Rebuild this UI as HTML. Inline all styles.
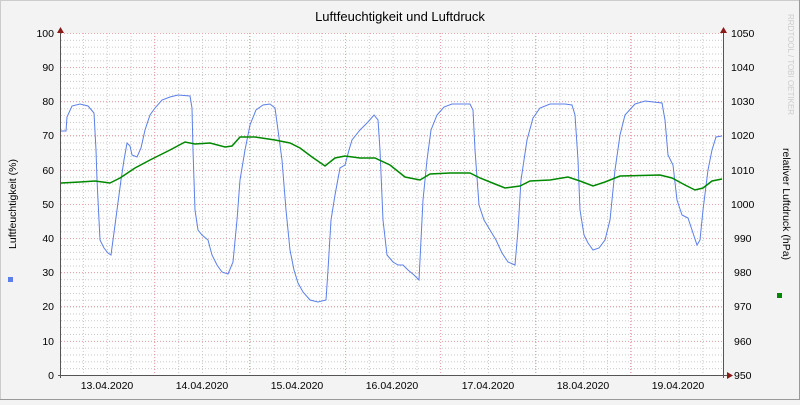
<!DOCTYPE html>
<html><head><style>
body{margin:0;width:800px;height:400px;overflow:hidden;background:#f3f3f3}
svg text{font-family:"Liberation Sans",sans-serif;font-size:10.5px;fill:#000}
</style></head><body>
<svg width="800" height="400" xmlns="http://www.w3.org/2000/svg">
<defs>
<pattern id="hg" x="61" y="33" width="800" height="6.84" patternUnits="userSpaceOnUse"><line x1="0" y1="0.5" x2="800" y2="0.5" stroke="#c8c8c8" stroke-width="1" stroke-dasharray="1,2"/></pattern>
<pattern id="vg" x="59.1" y="0" width="23.825" height="400" patternUnits="userSpaceOnUse"><line x1="0.5" y1="0" x2="0.5" y2="400" stroke="#c8c8c8" stroke-width="1" stroke-dasharray="1,2"/></pattern>
</defs>
<rect x="0" y="0" width="800" height="400" fill="#f3f3f3"/>
<rect x="0.5" y="0.5" width="799" height="399" fill="none" stroke="#ccc"/>
<line x1="0" y1="399.5" x2="800" y2="399.5" stroke="#999"/>
<line x1="799.5" y1="0" x2="799.5" y2="400" stroke="#999"/>
<rect x="61" y="33" width="662" height="342" fill="#fff"/>
<rect x="61" y="33" width="662" height="342" fill="url(#hg)"/>
<rect x="61" y="33" width="662" height="342" fill="url(#vg)"/>
<g stroke="#e8a8a8" stroke-dasharray="1,2">
<line x1="61" y1="33.5" x2="723" y2="33.5"/><line x1="61" y1="67.5" x2="723" y2="67.5"/><line x1="61" y1="101.5" x2="723" y2="101.5"/><line x1="61" y1="135.5" x2="723" y2="135.5"/><line x1="61" y1="170.5" x2="723" y2="170.5"/><line x1="61" y1="204.5" x2="723" y2="204.5"/><line x1="61" y1="238.5" x2="723" y2="238.5"/><line x1="61" y1="272.5" x2="723" y2="272.5"/><line x1="61" y1="306.5" x2="723" y2="306.5"/><line x1="61" y1="341.5" x2="723" y2="341.5"/>
<line x1="154.5" y1="33" x2="154.5" y2="375"/><line x1="249.5" y1="33" x2="249.5" y2="375"/><line x1="345.5" y1="33" x2="345.5" y2="375"/><line x1="440.5" y1="33" x2="440.5" y2="375"/><line x1="535.5" y1="33" x2="535.5" y2="375"/><line x1="630.5" y1="33" x2="630.5" y2="375"/>
</g>
<polyline fill="none" stroke="#5b7fe8" stroke-width="1" points="61,131 66,131 67,117 72,106 80,104 88,106 94,113 96,150 97,180 100,240 104,248 108,253 111,255 113,240 117,210 121,180 124,160 127,143 130,146 132,155 137,157 141,148 145,130 150,115 155,108 162,100 170,97 178,95 190,96 192,108 193,150 195,210 198,230 202,235 208,240 212,255 217,265 222,272 228,274 233,262 237,220 240,180 245,150 250,125 256,110 263,105 270,104 275,108 278,130 282,160 286,210 290,250 294,270 298,283 303,292 310,300 318,302 326,300 328,270 331,220 335,195 340,168 345,165 349,150 352,140 360,130 368,122 374,115 378,120 380,150 383,220 387,255 393,262 398,265 403,265 408,270 414,275 419,280 420,260 423,200 427,160 431,130 437,115 444,107 452,104 470,104 473,110 475,150 479,205 484,220 490,230 496,240 502,253 508,262 515,265 518,230 521,180 527,140 533,118 540,108 550,104 565,104 572,105 575,115 578,160 580,210 584,235 588,243 593,250 599,248 605,240 610,220 615,170 620,135 625,115 635,104 645,101 662,103 665,120 668,155 673,165 677,200 682,215 688,218 692,230 697,245 700,240 703,210 708,170 712,150 716,137 722,136"/>
<polyline fill="none" stroke="#008800" stroke-width="1.5" points="61,183 80,182 95,181 110,183 120,178 135,168 150,160 170,150 185,142 195,144 210,143 225,147 232,146 240,137 255,137 275,140 290,143 300,148 312,157 325,166 335,158 345,156 360,158 375,158 390,165 405,177 420,180 430,174 450,173 470,173 480,178 495,184 505,188 520,186 530,181 550,180 568,177 580,181 593,186 605,182 620,176 660,175 672,178 685,185 695,190 703,188 712,181 722,179"/>
<line x1="60.5" y1="29" x2="60.5" y2="378" stroke="#555"/>
<line x1="723.5" y1="29" x2="723.5" y2="378" stroke="#555"/>
<line x1="58" y1="375.5" x2="727" y2="375.5" stroke="#555"/>
<polygon points="57,33 64,33 60.5,27" fill="#8b1a1a"/>
<polygon points="720,33 727,33 723.5,27" fill="#8b1a1a"/>
<polygon points="727,372 727,379 733,375.5" fill="#8b1a1a"/>
<text x="400" y="21" text-anchor="middle" style="font-size:13px">Luftfeuchtigkeit und Luftdruck</text>
<g text-anchor="end">
<text x="54" y="37">100</text><text x="54" y="71">90</text><text x="54" y="105">80</text><text x="54" y="139">70</text><text x="54" y="174">60</text><text x="54" y="208">50</text><text x="54" y="242">40</text><text x="54" y="276">30</text><text x="54" y="310">20</text><text x="54" y="345">10</text><text x="54" y="379">0</text>
</g>
<g>
<text x="731" y="37">1050</text><text x="731" y="71">1040</text><text x="731" y="105">1030</text><text x="731" y="139">1020</text><text x="731" y="174">1010</text><text x="731" y="208">1000</text><text x="734" y="242">990</text><text x="734" y="276">980</text><text x="734" y="310">970</text><text x="734" y="345">960</text><text x="734" y="379">950</text>
</g>
<g text-anchor="middle">
<text x="107" y="389">13.04.2020</text><text x="202" y="389">14.04.2020</text><text x="297" y="389">15.04.2020</text><text x="392" y="389">16.04.2020</text><text x="488" y="389">17.04.2020</text><text x="583" y="389">18.04.2020</text><text x="678" y="389">19.04.2020</text>
</g>
<text transform="translate(16,204) rotate(-90)" text-anchor="middle">Luftfeuchtigkeit (%)</text>
<text transform="translate(783,204) rotate(90)" text-anchor="middle">relativer Luftdruck (hPa)</text>
<rect x="8" y="277" width="5" height="5" fill="#5b7fe8"/>
<rect x="777" y="293" width="5" height="5" fill="#008800"/>
<text transform="translate(788,14) rotate(90)" style="font-size:8px;fill:#ccc">RRDTOOL / TOBI OETIKER</text>
</svg>
</body></html>
